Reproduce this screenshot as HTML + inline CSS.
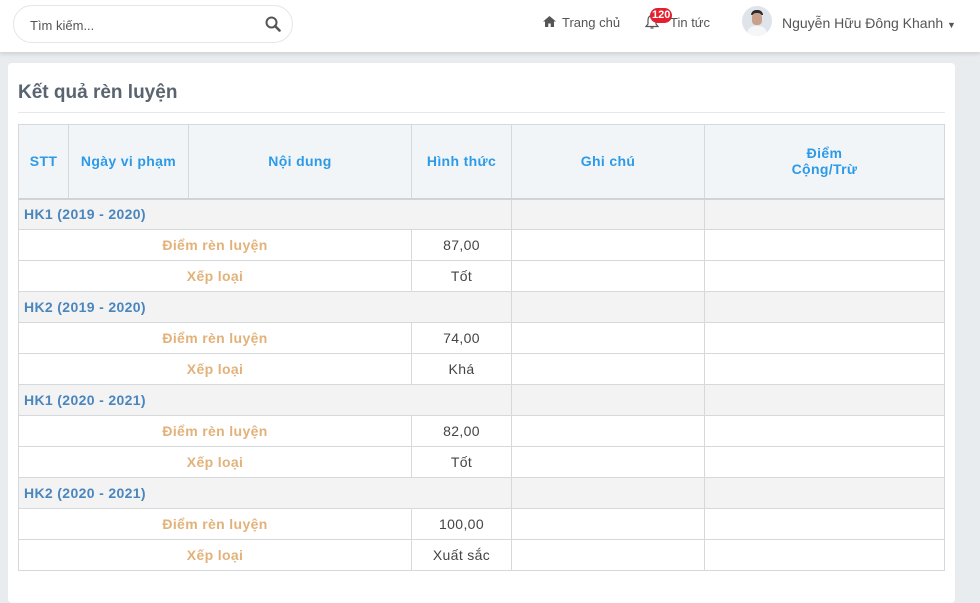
<!DOCTYPE html>
<html><head><meta charset="utf-8"><style>
*{box-sizing:border-box;margin:0;padding:0}
body{width:980px;height:592px;background:#e9ecef;font-family:"Liberation Sans",sans-serif;overflow:hidden;position:relative}
.top{position:absolute;left:0;top:0;width:980px;height:52px;background:#fff;box-shadow:0 2px 4px rgba(0,0,0,.12)}
.search{position:absolute;left:13px;top:5px;width:280px;height:38px;border:1px solid #e3e6ea;border-radius:19px}
.search span{position:absolute;left:16px;top:12px;font-size:13px;color:#555}
.nav{position:absolute;top:15px;font-size:13px;color:#555}
.card{position:absolute;left:8px;top:63px;width:947px;height:540px;background:#fff;border-radius:4px}
h2{position:absolute;left:10px;top:19px;font-size:19px;color:#5a6470;font-weight:bold}
.hr{position:absolute;left:10px;top:49px;width:927px;height:1px;background:#e8e8e8}
table{position:absolute;left:10px;top:61px;border-collapse:collapse;width:927px;font-size:14px;letter-spacing:0.35px}
td,th{border:1px solid #d6d9dc;height:31px}
th{background:#f2f5f8;color:#2d9ae8;height:74px;border-bottom:2px solid #d0d4d7;font-weight:bold}
.g td{background:#f3f3f3}
.g td:first-child{color:#4a86be;font-weight:bold;padding-left:5px;font-size:14px}
.o{color:#e2b27a;font-weight:bold;text-align:center}
.c{text-align:center;color:#444}
</style></head><body>
<div class="top">
 <div class="search"><span>Tìm kiếm...</span>
  <svg style="position:absolute;right:11px;top:10px" width="16" height="16" viewBox="0 0 16 16"><circle cx="6.5" cy="6.5" r="5" fill="none" stroke="#555" stroke-width="2"/><path d="M10 10l4.5 4.5" stroke="#555" stroke-width="2.6" stroke-linecap="round"/></svg></div>
 <svg style="position:absolute;left:543px;top:16px" width="13" height="11" viewBox="0 0 13 11"><path d="M6.5 0L0 5.5h2V11h3.3V7.5h2.4V11H11V5.5h2z" fill="#555"/></svg>
 <div class="nav" style="left:562px">Trang chủ</div>
 <svg style="position:absolute;left:645px;top:14px" width="14" height="16" viewBox="0 0 14 16"><path d="M7 1.5c-2.5 0-4 2-4 4.5v4l-2 2.5h12l-2-2.5V6c0-2.5-1.5-4.5-4-4.5zM5.5 14h3" fill="none" stroke="#555" stroke-width="1.2"/></svg>
 <div style="position:absolute;left:650px;top:8px;background:#e4202f;color:#fff;font-size:11px;font-weight:bold;border-radius:8px;padding:0 2px;height:15px;line-height:15px">120</div>
 <div class="nav" style="left:670px">Tin tức</div>
 <div style="position:absolute;left:742px;top:6px;width:30px;height:30px;border-radius:50%;overflow:hidden;background:#dfe4ea">
  <div style="position:absolute;left:9px;top:4px;width:12px;height:5px;background:#2b2b2b;border-radius:5px 5px 0 0"></div>
  <div style="position:absolute;left:10px;top:7px;width:10px;height:12px;background:#c9a08a;border-radius:4px"></div>
  <div style="position:absolute;left:5px;top:20px;width:20px;height:14px;background:#f4f6f8;border-radius:8px 8px 0 0"></div>
 </div>
 <div class="nav" style="left:782px;font-size:14px;top:15px">Nguyễn Hữu Đông Khanh <span style="font-size:9px">▼</span></div>
</div>
<div class="card">
<h2>Kết quả rèn luyện</h2><div class="hr"></div>
<table>
<tr><th style="width:50px">STT</th><th style="width:120px">Ngày vi phạm</th><th style="width:223px">Nội dung</th><th style="width:100px">Hình thức</th><th style="width:193px">Ghi chú</th><th>Điểm<br>Cộng/Trừ</th></tr>
<tr class="g"><td colspan="4">HK1 (2019 - 2020)</td><td></td><td></td></tr>
<tr><td colspan="3" class="o">Điểm rèn luyện</td><td class="c">87,00</td><td></td><td></td></tr>
<tr><td colspan="3" class="o">Xếp loại</td><td class="c">Tốt</td><td></td><td></td></tr>
<tr class="g"><td colspan="4">HK2 (2019 - 2020)</td><td></td><td></td></tr>
<tr><td colspan="3" class="o">Điểm rèn luyện</td><td class="c">74,00</td><td></td><td></td></tr>
<tr><td colspan="3" class="o">Xếp loại</td><td class="c">Khá</td><td></td><td></td></tr>
<tr class="g"><td colspan="4">HK1 (2020 - 2021)</td><td></td><td></td></tr>
<tr><td colspan="3" class="o">Điểm rèn luyện</td><td class="c">82,00</td><td></td><td></td></tr>
<tr><td colspan="3" class="o">Xếp loại</td><td class="c">Tốt</td><td></td><td></td></tr>
<tr class="g"><td colspan="4">HK2 (2020 - 2021)</td><td></td><td></td></tr>
<tr><td colspan="3" class="o">Điểm rèn luyện</td><td class="c">100,00</td><td></td><td></td></tr>
<tr><td colspan="3" class="o">Xếp loại</td><td class="c">Xuất sắc</td><td></td><td></td></tr>
</table>
</div>
</body></html>
